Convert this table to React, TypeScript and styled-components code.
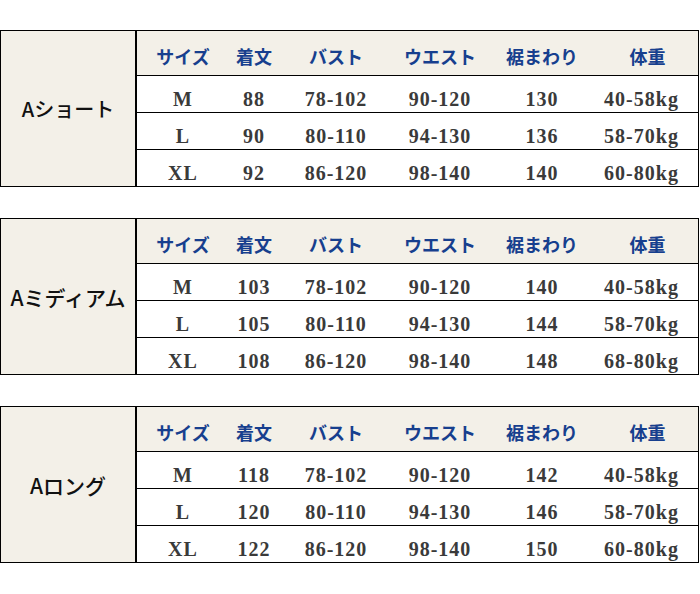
import React from "react";
import styled, { createGlobalStyle } from "styled-components";

const GlobalStyle = createGlobalStyle`
  html, body { margin: 0; padding: 0; background: #ffffff; }
  * { box-sizing: border-box; }
`;

const Page = styled.div`
  display: flex;
  flex-direction: column;
  gap: 31px;
  padding-top: 30px;
  width: 700px;
`;

const Table = styled.section`
  display: flex;
  width: 699px;
  border: 1px solid #000;
`;

const Label = styled.div`
  width: 136px;
  flex: none;
  border-right: 2px solid #000;
  background: #f3f0e8;
  display: flex;
  align-items: center;
  justify-content: center;
  font-family: "Noto Sans CJK JP", "Noto Sans", sans-serif;
  font-weight: 500;
  font-size: ${(p: { $size: number }) => p.$size}px;
  color: #111;
  white-space: nowrap;
  letter-spacing: 0;
`;

const Grid = styled.div`
  flex: 1;
  display: grid;
  grid-template-columns: 92px 50px 114px 94px 110px 1fr;
`;

const HeadCell = styled.div`
  height: 45px;
  padding-top: 16px;
  border-bottom: 1px solid #000;
  background: #f3f0e8;
  text-align: center;
  font-family: "Noto Sans CJK JP", sans-serif;
  font-weight: 700;
  font-size: 18px;
  line-height: 18px;
  color: #173f8e;
  white-space: nowrap;
  &:last-child { padding-right: 12px; }
`;

const Cell = styled.div<{ $last?: boolean; $end?: boolean }>`
  height: ${(p) => (p.$last ? 36 : 37)}px;
  padding-top: 13px;
  padding-right: ${(p) => (p.$end ? 12 : 0)}px;
  border-bottom: ${(p) => (p.$last ? "none" : "1px solid #000")};
  background: #fff;
  text-align: center;
  font-family: "Liberation Serif", "Times New Roman", serif;
  font-weight: 700;
  font-size: 20px;
  line-height: 20px;
  letter-spacing: 1px;
  color: #3a3a3a;
  white-space: nowrap;
`;

const headers = ["サイズ", "着文", "バスト", "ウエスト", "裾まわり", "体重"];

type Section = { name: string; size: number; rows: string[][] };

const sections: Section[] = [
  {
    name: "Aショート",
    size: 20,
    rows: [
      ["M", "88", "78-102", "90-120", "130", "40-58kg"],
      ["L", "90", "80-110", "94-130", "136", "58-70kg"],
      ["XL", "92", "86-120", "98-140", "140", "60-80kg"],
    ],
  },
  {
    name: "Aミディアム",
    size: 21,
    rows: [
      ["M", "103", "78-102", "90-120", "140", "40-58kg"],
      ["L", "105", "80-110", "94-130", "144", "58-70kg"],
      ["XL", "108", "86-120", "98-140", "148", "68-80kg"],
    ],
  },
  {
    name: "Aロング",
    size: 21,
    rows: [
      ["M", "118", "78-102", "90-120", "142", "40-58kg"],
      ["L", "120", "80-110", "94-130", "146", "58-70kg"],
      ["XL", "122", "86-120", "98-140", "150", "60-80kg"],
    ],
  },
];

export default function App() {
  return (
    <>
      <GlobalStyle />
      <Page>
        {sections.map((s) => (
          <Table key={s.name}>
            <Label $size={s.size}>{s.name}</Label>
            <Grid>
              {headers.map((h) => (
                <HeadCell key={h}>{h}</HeadCell>
              ))}
              {s.rows.map((r, ri) =>
                r.map((v, ci) => (
                  <Cell
                    key={`${ri}-${ci}`}
                    $last={ri === s.rows.length - 1}
                    $end={ci === r.length - 1}
                  >
                    {v}
                  </Cell>
                ))
              )}
            </Grid>
          </Table>
        ))}
      </Page>
    </>
  );
}
